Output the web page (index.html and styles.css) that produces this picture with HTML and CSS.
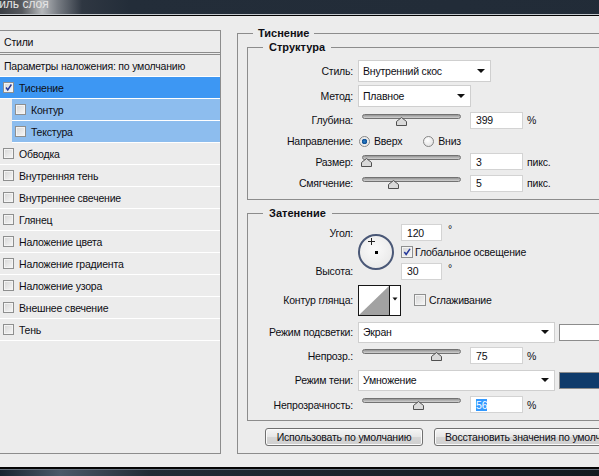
FILE: index.html
```html
<!DOCTYPE html>
<html lang="ru">
<head>
    <meta charset="UTF-8">
    <meta name="viewport" content="width=device-width, initial-scale=1.0">
    <title>Стиль слоя</title>
    <link rel="stylesheet" href="styles.css">
</head>
<body>
<div class="window">
    <div class="titlebar"><span class="title">Стиль слоя</span></div>
    <div class="dialog">
        <!-- список эффектов слева -->
        <div class="styles">
            <div class="styles-head">Стили</div>
            <div class="style-row plain">Параметры наложения: по умолчанию</div>
            <div class="style-row selected"><span class="check checked"><svg viewBox="0 0 11 11"><path d="M2.5 5.5 L4.6 8.4 L9 1.8" /></svg></span>Тиснение</div>
            <div class="style-row sub"><span class="check"></span>Контур</div>
            <div class="style-row sub"><span class="check"></span>Текстура</div>
            <div class="style-row"><span class="check"></span>Обводка</div>
            <div class="style-row"><span class="check"></span>Внутренняя тень</div>
            <div class="style-row"><span class="check"></span>Внутреннее свечение</div>
            <div class="style-row"><span class="check"></span>Глянец</div>
            <div class="style-row"><span class="check"></span>Наложение цвета</div>
            <div class="style-row"><span class="check"></span>Наложение градиента</div>
            <div class="style-row"><span class="check"></span>Наложение узора</div>
            <div class="style-row"><span class="check"></span>Внешнее свечение</div>
            <div class="style-row"><span class="check"></span>Тень</div>
        </div>

        <div class="settings">
            <fieldset class="group outer">
                <legend>Тиснение</legend>

                <fieldset class="group">
                    <legend>Структура</legend>
                    <div class="form structure">
                        <div class="row">
                            <label>Стиль:</label>
                            <div class="select w-style"><span>Внутренний скос</span><i class="arrow"></i></div>
                        </div>
                        <div class="row">
                            <label>Метод:</label>
                            <div class="select w-method"><span>Плавное</span><i class="arrow"></i></div>
                        </div>
                        <div class="row">
                            <label>Глубина:</label>
                            <div class="slider"><div class="track"></div><svg class="thumb" style="left:34px" viewBox="0 0 11 9"><polygon points="0.5,4.5 5.5,0.5 10.5,4.5 10.5,8.5 0.5,8.5" /></svg></div>
                            <div class="input">399</div><span class="unit">%</span>
                        </div>
                        <div class="row">
                            <label>Направление:</label>
                            <span class="radio on"></span><span class="radio-text">Вверх</span>
                            <span class="radio second"></span><span class="radio-text">Вниз</span>
                        </div>
                        <div class="row">
                            <label>Размер:</label>
                            <div class="slider"><div class="track"></div><svg class="thumb" style="left:-1px" viewBox="0 0 11 9"><polygon points="0.5,4.5 5.5,0.5 10.5,4.5 10.5,8.5 0.5,8.5" /></svg></div>
                            <div class="input">3</div><span class="unit">пикс.</span>
                        </div>
                        <div class="row">
                            <label>Смягчение:</label>
                            <div class="slider"><div class="track"></div><svg class="thumb" style="left:26px" viewBox="0 0 11 9"><polygon points="0.5,4.5 5.5,0.5 10.5,4.5 10.5,8.5 0.5,8.5" /></svg></div>
                            <div class="input">5</div><span class="unit">пикс.</span>
                        </div>
                    </div>
                </fieldset>

                <fieldset class="group shade">
                    <legend>Затенение</legend>
                    <div class="form shading">
                        <div class="angle">
                            <label class="angle-label">Угол:</label>
                            <label class="height-label">Высота:</label>
                            <div class="dial"><span class="cross"></span><span class="dot"></span></div>
                            <div class="field angle-field"><div class="input small">120</div><span class="deg">°</span></div>
                            <div class="field global"><span class="check big checked"><svg viewBox="0 0 12 12"><path d="M2.8 6 L5 9 L9.6 2.2" /></svg></span>Глобальное освещение</div>
                            <div class="field height-field"><div class="input small">30</div><span class="deg">°</span></div>
                        </div>
                        <div class="row">
                            <label>Контур глянца:</label>
                            <svg class="contour" viewBox="0 0 43 31">
                                <rect x="0.5" y="0.5" width="42" height="30" fill="#fff" stroke="#161616" />
                                <polygon points="1,30 31,1 31,30" fill="#a2a2a2" />
                                <line x1="31.5" y1="0" x2="31.5" y2="31" stroke="#161616" />
                                <polygon points="34.5,12.5 39.5,12.5 37,15.5" fill="#111" />
                            </svg>
                            <span class="check big smooth"></span><span class="check-text">Сглаживание</span>
                        </div>
                        <div class="row">
                            <label>Режим подсветки:</label>
                            <div class="select w-mode"><span>Экран</span><i class="arrow"></i></div>
                            <div class="swatch light"></div>
                        </div>
                        <div class="row">
                            <label>Непрозр.:</label>
                            <div class="slider"><div class="track"></div><svg class="thumb" style="left:69px" viewBox="0 0 11 9"><polygon points="0.5,4.5 5.5,0.5 10.5,4.5 10.5,8.5 0.5,8.5" /></svg></div>
                            <div class="input">75</div><span class="unit">%</span>
                        </div>
                        <div class="row">
                            <label>Режим тени:</label>
                            <div class="select w-mode"><span>Умножение</span><i class="arrow"></i></div>
                            <div class="swatch dark"></div>
                        </div>
                        <div class="row">
                            <label>Непрозрачность:</label>
                            <div class="slider"><div class="track"></div><svg class="thumb" style="left:51px" viewBox="0 0 11 9"><polygon points="0.5,4.5 5.5,0.5 10.5,4.5 10.5,8.5 0.5,8.5" /></svg></div>
                            <div class="input"><span class="picked">56</span></div><span class="unit">%</span>
                        </div>
                    </div>
                </fieldset>

                <div class="buttons">
                    <div class="btn first">Использовать по умолчанию</div>
                    <div class="btn">Восстановить значения по умолчанию</div>
                </div>
            </fieldset>
        </div>
    </div>
    <div class="bottombar"></div>
</div>
</body>
</html>
```

FILE: styles.css
```css
* {
    box-sizing: border-box;
}
body {
    margin: 0;
    background: #ececec;
    font-family: "Liberation Sans", Arial, sans-serif;
    font-size: 10.5px;
    letter-spacing: -0.2px;
    color: #0e0e14;
    overflow: hidden;
}
.window {
    width: 780px;
    height: 476px;
    display: flex;
    flex-direction: column;
}

/* заголовок окна */
.titlebar {
    flex: none;
    height: 16px;
    overflow: hidden;
    background: linear-gradient(90deg, #3a3e44 0, #56595e 22px, #b5b8bb 42px, #777c83 58px, #2f3742 82px, #232d39 130px, #212b37 100%);
    border-bottom: 1px solid #030303;
    box-shadow: inset 0 -1px 0 #c2c7cc;
    color: #e4e4e4;
}
.title {
    display: block;
    margin: -2px 0 0 -15px;
    font-size: 12px;
    line-height: 12px;
    letter-spacing: 0;
}
.dialog {
    flex: 1;
    display: flex;
    align-items: flex-start;
}
.bottombar {
    flex: none;
    height: 9px;
    background:
        linear-gradient(to bottom, #040404 0 2px, #66707c 2px 3px, transparent 3px),
        linear-gradient(90deg, #18232f 0, #4b5969 60px, #222b35 150px, #0e1217 100%);
}

/* список стилей */
.styles {
    flex: none;
    width: 221px;
    height: 424px;
    margin-top: 14px;
    border: 1px solid #8c8c8c;
    border-left: none;
}
.styles-head {
    height: 24px;
    padding-left: 4px;
    display: flex;
    align-items: center;
    border-bottom: 3px double #8c8c8c;
}
.style-row {
    height: 22px;
    display: flex;
    align-items: center;
    padding-left: 3px;
    border-bottom: 1px solid #fff;
    white-space: nowrap;
}
.style-row.plain {
    padding-left: 4px;
}
.style-row .check {
    margin-right: 5px;
}
.style-row.selected {
    background: #3d97f3;
}
.style-row.sub {
    margin-left: 12px;
    background: #8dbdee;
}

/* флажки и переключатели */
.check {
    flex: none;
    width: 11px;
    height: 11px;
    border: 1px solid #8e8f8f;
    background: linear-gradient(135deg, #d6d6d6, #f7f7f7);
    box-shadow: inset 0 0 0 1px #f4f4f4;
    display: inline-flex;
}
.check.big {
    width: 12px;
    height: 12px;
}
.check svg {
    width: 100%;
    height: 100%;
}
.check path {
    fill: none;
    stroke: #24379a;
    stroke-width: 1.8;
}
.radio {
    flex: none;
    width: 11px;
    height: 11px;
    margin-left: 1px;
    border-radius: 50%;
    border: 1px solid #868686;
    background: radial-gradient(circle at 40% 35%, #fff, #dcdcdc);
}
.radio.on {
    background: radial-gradient(circle, #2a7fc8 0, #0f4f94 2.5px, #e6e6e6 3px, #fdfdfd 100%);
}
.radio.second {
    margin-left: 21px;
}
.radio-text {
    margin-left: 4px;
}

/* группы */
fieldset.group {
    margin: 0;
    padding: 0;
    min-width: 0;
    border: 1px solid #8c8c8c;
}
.group legend {
    font-size: 11px;
    font-weight: bold;
    letter-spacing: 0;
    line-height: 13px;
    padding: 0 6px;
    margin-left: 15px;
}
.settings {
    flex: 1;
    margin: 11px 0 0 16px;
}
.group.outer {
    padding: 0 0 7px 9px;
}
.group.outer > legend {
    margin-left: 6px;
    padding: 0 5px;
}
.outer > .group {
    margin-top: 1px;
}
.outer > .group.shade {
    margin-top: 7px;
}

.form {
    display: grid;
}
.structure {
    grid-template-rows: 25px 26px 22px 20px 21px 22px;
    padding: 4px 0 5px;
}
.shading {
    grid-template-rows: 58px 38px 26px 21px 28px 21px;
    padding: 3px 0 5px;
}
.row {
    display: flex;
    align-items: center;
    white-space: nowrap;
}
.row > label {
    flex: none;
    width: 105px;
    margin-right: 5px;
    text-align: right;
}

/* выпадающие списки */
.select {
    position: relative;
    height: 22px;
    display: flex;
    align-items: center;
    padding-left: 4px;
    background: #fff;
    border: 1px solid #cfcfcf;
}
.select .arrow {
    position: absolute;
    right: 5px;
    top: 50%;
    margin-top: -2px;
    border-left: 4px solid transparent;
    border-right: 4px solid transparent;
    border-top: 4px solid #111;
}
.w-style {
    width: 133px;
}
.w-method {
    width: 113px;
}
.w-mode {
    width: 197px;
    height: 21px;
}
.swatch {
    width: 60px;
    height: 17px;
    margin-left: 4px;
    border: 1px solid #8c8c8c;
}
.swatch.light {
    background: #fff;
}
.swatch.dark {
    background: #0f3b6b;
}

/* ползунки и поля */
.slider {
    position: relative;
    flex: none;
    width: 99px;
    height: 13px;
    margin-left: 4px;
}
.track {
    height: 5px;
    border: 1px solid #727272;
    border-radius: 3px;
    background: linear-gradient(#949494, #d2d2d2);
}
.thumb {
    position: absolute;
    top: 3px;
    width: 11px;
    height: 9px;
}
.thumb polygon {
    fill: #dadada;
    stroke: #505050;
    stroke-width: 1;
}
.input {
    flex: none;
    width: 53px;
    height: 17px;
    margin-left: 9px;
    padding-left: 5px;
    display: flex;
    align-items: center;
    background: #fff;
    border: 1px solid #d3d3d3;
}
.input.small {
    width: 41px;
    margin-left: 0;
}
.picked {
    background: #3399ff;
    color: #fff;
}
.unit {
    margin-left: 4px;
}

/* угол освещения */
.angle {
    display: grid;
    grid-template-columns: 105px 38px auto;
    grid-template-rows: 19px 19px 20px;
    column-gap: 5px;
    align-items: center;
}
.angle label {
    text-align: right;
}
.angle-label {
    grid-area: 1 / 1;
}
.height-label {
    grid-area: 3 / 1;
}
.dial {
    grid-area: 1 / 2 / 4 / 3;
    position: relative;
    width: 36px;
    height: 36px;
    border-radius: 50%;
    border: 2px solid #4a5877;
    background: radial-gradient(circle at 45% 40%, #fbfbfb, #e4e4e4);
}
.dot {
    position: absolute;
    left: 15px;
    top: 15px;
    width: 3px;
    height: 3px;
    background: #000;
}
.cross {
    position: absolute;
    left: 8px;
    top: 2px;
    width: 7px;
    height: 7px;
    background:
        linear-gradient(#222, #222) center / 1px 7px no-repeat,
        linear-gradient(#222, #222) center / 7px 1px no-repeat;
}
.field {
    display: flex;
    align-items: center;
    white-space: nowrap;
}
.angle-field {
    grid-area: 1 / 3;
}
.global {
    grid-area: 2 / 3;
}
.global .check {
    margin-right: 2px;
}
.height-field {
    grid-area: 3 / 3;
}
.deg {
    align-self: flex-start;
    margin: -1px 0 0 6px;
}

.contour {
    flex: none;
    width: 43px;
    height: 31px;
}
.check.smooth {
    margin-left: 13px;
}
.check-text {
    margin-left: 3px;
}

/* кнопки */
.buttons {
    display: flex;
    gap: 11px;
    margin: 7px 0 0 18px;
}
.btn {
    height: 18px;
    padding: 0 10px;
    display: flex;
    align-items: center;
    justify-content: center;
    white-space: nowrap;
    border: 1px solid #707070;
    border-radius: 3px;
    background: linear-gradient(#f5f5f5, #e6e6e6 50%, #d6d6d6 51%, #cfcfcf);
    box-shadow: inset 0 0 0 1px #fbfbfb;
}
.btn.first {
    width: 158px;
}
```
